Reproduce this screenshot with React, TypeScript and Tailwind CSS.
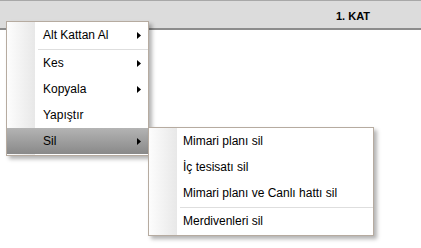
import React from 'react';

interface MenuItem {
  label: string;
  arrow?: boolean;
  active?: boolean;
  sepAfter?: boolean;
}

const mainItems: MenuItem[] = [
  { label: 'Alt Kattan Al', arrow: true, sepAfter: true },
  { label: 'Kes', arrow: true },
  { label: 'Kopyala', arrow: true },
  { label: 'Yapıştır' },
  { label: 'Sil', arrow: true, active: true },
];

const subItems: MenuItem[] = [
  { label: 'Mimari planı sil' },
  { label: 'İç tesisatı sil' },
  { label: 'Mimari planı ve Canlı hattı sil', sepAfter: true },
  { label: 'Merdivenleri sil' },
];

function Arrow() {
  return (
    <svg width="4" height="7" viewBox="0 0 4 7" className="shrink-0">
      <polygon points="0,0 4,3.5 0,7" fill="#000" />
    </svg>
  );
}

function Menu({ items, textPad }: { items: MenuItem[]; textPad: string }) {
  return (
    <div className="relative pb-px">
      {/* icon column */}
      <div className="absolute inset-y-0 left-0 w-[28px] bg-linear-to-r from-[#fdfdfd] to-[#e8e8e8]" />
      {items.map((item, i) => (
        <React.Fragment key={i}>
          <div
            className={`relative flex h-[26px] items-center pr-[7px] text-[12px] text-black ${textPad} ${
              item.active ? 'bg-linear-to-b from-[#b4b4b4] to-[#898989]' : ''
            }`}
          >
            <span className="flex-1 whitespace-nowrap">{item.label}</span>
            {item.arrow && <Arrow />}
          </div>
          {item.sepAfter && (
            <div className="relative flex h-[2px] items-end pl-[31px]">
              <div className="h-px flex-1 bg-[#dedede]" />
            </div>
          )}
        </React.Fragment>
      ))}
    </div>
  );
}

export default function App() {
  return (
    <div className="relative h-[248px] w-[421px] overflow-hidden bg-white font-['Liberation_Sans',Arial,sans-serif]">
      {/* header bar */}
      <div className="flex h-[30px] items-center justify-end border-t border-b-2 border-t-[#a8a8a8] border-b-[#8c8c8c] bg-[#dcdcdc]">
        <span className="w-[136px] pt-[3px] text-center text-[11px] font-bold text-black">1. KAT</span>
      </div>

      {/* context menu */}
      <div className="absolute left-[6px] top-[21px] z-10 w-[143px] border border-[#b6aba0] bg-white shadow-[3px_3px_4px_rgba(0,0,0,0.3)]">
        <Menu items={mainItems} textPad="pl-[36px]" />
      </div>

      {/* submenu */}
      <div className="absolute left-[148px] top-[127px] z-20 w-[226px] border border-[#b6aba0] bg-white shadow-[3px_3px_4px_rgba(0,0,0,0.3)]">
        <Menu items={subItems} textPad="pl-[34px]" />
      </div>
    </div>
  );
}
